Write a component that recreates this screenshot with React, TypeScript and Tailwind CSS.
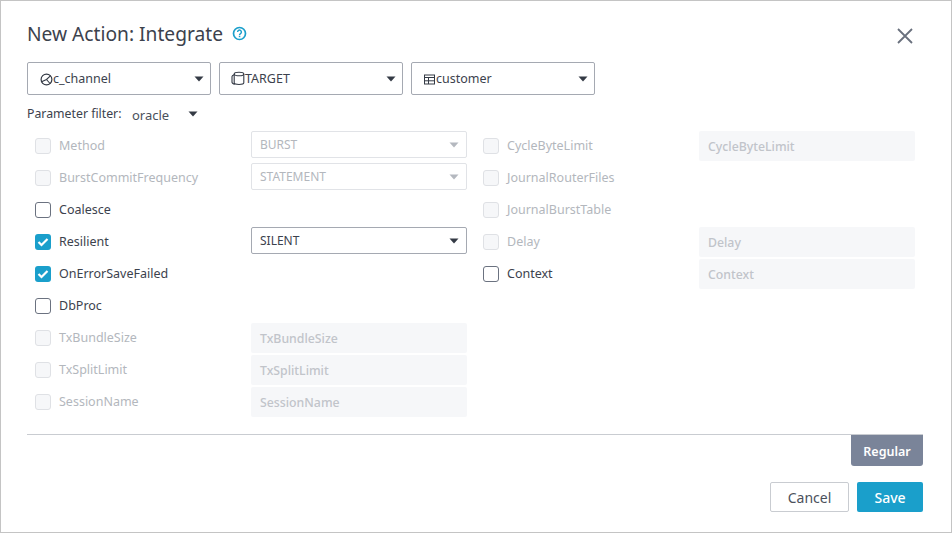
import React from "react";

const font = { fontFamily: '"Noto Sans", "Open Sans", sans-serif' };

function Caret({ light }: { light?: boolean }) {
  return (
    <svg width="10" height="6" viewBox="0 0 10 6" className="shrink-0">
      <path d="M0.5 0.5h9L5 5.5z" fill={light ? "#b4b8bf" : "#343a45"} />
    </svg>
  );
}

function Check({ state }: { state: "off" | "on" | "disabled" }) {
  if (state === "on")
    return (
      <span className="flex h-4 w-4 shrink-0 items-center justify-center rounded-[3px] bg-[#1a9fcb]">
        <svg width="12" height="10" viewBox="0 0 12 10" fill="none">
          <path d="M1.5 5l3 3 6-6" stroke="#fff" strokeWidth="2.2" />
        </svg>
      </span>
    );
  if (state === "disabled")
    return <span className="h-4 w-4 shrink-0 rounded-[3px] border border-[#dfe1e5] bg-[#f6f7f9]" />;
  return <span className="h-4 w-4 shrink-0 rounded-[3px] border border-[#6b7280] bg-white" />;
}

function CheckLabel({ label, state }: { label: string; state: "off" | "on" | "disabled" }) {
  return (
    <div className="flex items-center gap-2">
      <Check state={state} />
      <span className={state === "disabled" ? "text-[12.5px] text-[#b3b7bd]" : "text-[12.5px] text-[#3c424d]"}>
        {label}
      </span>
    </div>
  );
}

function TopSelect({ icon, label }: { icon: React.ReactNode; label: string }) {
  return (
    <div className="flex h-[33px] w-[184px] items-center rounded-[2px] border border-[#a5a9b2] pl-[12px] pr-[6px] text-[12.5px] text-[#3c424d]">
      {icon}
      <span className="mt-[2px] flex-1">{label}</span>
      <Caret />
    </div>
  );
}

function Select({ value, disabled }: { value: string; disabled?: boolean }) {
  return (
    <div
      className={
        disabled
          ? "mb-[3px] flex h-[27px] w-[216px] items-center justify-between rounded-[2px] border border-[#e1e3e7] pl-2 pr-[7px] text-[12px] text-[#b3b7bd]"
          : "mb-[3px] flex h-[27px] w-[216px] items-center justify-between rounded-[2px] border border-[#a5a9b2] pl-2 pr-[7px] text-[12px] text-[#3c424d]"
      }
    >
      <span>{value}</span>
      <Caret light={disabled} />
    </div>
  );
}

function Input({ placeholder }: { placeholder: string }) {
  return (
    <div className="flex h-[30px] w-[216px] items-center rounded-[2px] bg-[#f6f7f9] pl-[9px] pt-[3px] text-[12.3px] font-medium text-[#c1c4ca]">
      {placeholder}
    </div>
  );
}

function Row({ left, mid, right, end }: { left: React.ReactNode; mid?: React.ReactNode; right?: React.ReactNode; end?: React.ReactNode }) {
  return (
    <div className="grid h-8 grid-cols-[224px_232px_216px_216px] items-center">
      <div className="pl-2">{left}</div>
      <div>{mid}</div>
      <div>{right}</div>
      <div>{end}</div>
    </div>
  );
}

export default function App() {
  return (
    <div style={font} className="box-border h-[533px] w-[952px] border border-[#c4c4c4] bg-white pl-[26px] pr-[28px]">
      <div className="flex h-[61px] items-center pt-[4px]">
        <span className="mt-[2px] text-[19.2px] text-[#3c424d]">New Action: Integrate</span>
        <svg width="15" height="15" viewBox="0 0 15 15" fill="none" className="ml-[9px]">
          <circle cx="7.5" cy="7.5" r="6" stroke="#1a9fcb" strokeWidth="1.7" />
          <path d="M5.6 6a1.9 1.9 0 1 1 2.9 1.6c-.6.4-1 .7-1 1.3" stroke="#1a9fcb" strokeWidth="1.4" />
          <rect x="6.8" y="9.7" width="1.5" height="1.5" fill="#1a9fcb" />
        </svg>
        <svg width="18" height="18" viewBox="0 0 18 18" fill="none" className="ml-auto mr-[9px] mt-[4px]">
          <path d="M2 2l14 14M16 2L2 16" stroke="#69707d" strokeWidth="1.8" />
        </svg>
      </div>

      <div className="flex gap-2">
        <TopSelect
          label="c_channel"
          icon={
            <svg width="13" height="13" viewBox="0 0 13 13" fill="none" className="mt-[1px] shrink-0">
              <circle cx="6.5" cy="6.5" r="5.4" stroke="#343a45" strokeWidth="1.2" />
              <path d="M1.6 8.8L6.5 6.5L10.4 2.8M6.5 6.5L10 10.5" stroke="#343a45" strokeWidth="1.1" />
            </svg>
          }
        />
        <TopSelect
          label="TARGET"
          icon={
            <svg width="14" height="15" viewBox="0 0 14 15" fill="none" className="-ml-[1px] shrink-0">
              <ellipse cx="8" cy="3" rx="4.8" ry="1.8" stroke="#343a45" strokeWidth="1.1" />
              <path d="M3.2 3v8.8c0 1 2.1 1.7 4.8 1.7s4.8-.7 4.8-1.7V3" stroke="#343a45" strokeWidth="1.1" />
              <path d="M3.2 3.8C1.6 4.4 1 5 1 5.6v5.6c0 .9 1 1.6 2.9 2.1" stroke="#343a45" strokeWidth="1.1" />
            </svg>
          }
        />
        <TopSelect
          label="customer"
          icon={
            <svg width="12" height="11" viewBox="0 0 12 11" fill="none" className="mt-[1px] shrink-0">
              <rect x="0.5" y="1" width="10" height="9" stroke="#343a45" />
              <path d="M0.5 3.5h10M0.5 6.8h10M4.5 3.5V10" stroke="#343a45" />
            </svg>
          }
        />
      </div>

      <div className="mt-[9px] flex h-[20px] items-center text-[12.3px] text-[#3c424d]">
        <span className="w-[105px]">Parameter filter:</span>
        <span className="mt-[4px] w-[56px] text-[13px] text-[#4b515c]">oracle</span>
        <Caret />
      </div>

      <div className="mt-[6px]">
        <Row
          left={<CheckLabel label="Method" state="disabled" />}
          mid={<Select value="BURST" disabled />}
          right={<CheckLabel label="CycleByteLimit" state="disabled" />}
          end={<Input placeholder="CycleByteLimit" />}
        />
        <Row
          left={<CheckLabel label="BurstCommitFrequency" state="disabled" />}
          mid={<Select value="STATEMENT" disabled />}
          right={<CheckLabel label="JournalRouterFiles" state="disabled" />}
        />
        <Row left={<CheckLabel label="Coalesce" state="off" />} right={<CheckLabel label="JournalBurstTable" state="disabled" />} />
        <Row
          left={<CheckLabel label="Resilient" state="on" />}
          mid={<Select value="SILENT" />}
          right={<CheckLabel label="Delay" state="disabled" />}
          end={<Input placeholder="Delay" />}
        />
        <Row
          left={<CheckLabel label="OnErrorSaveFailed" state="on" />}
          right={<CheckLabel label="Context" state="off" />}
          end={<Input placeholder="Context" />}
        />
        <Row left={<CheckLabel label="DbProc" state="off" />} />
        <Row left={<CheckLabel label="TxBundleSize" state="disabled" />} mid={<Input placeholder="TxBundleSize" />} />
        <Row left={<CheckLabel label="TxSplitLimit" state="disabled" />} mid={<Input placeholder="TxSplitLimit" />} />
        <Row left={<CheckLabel label="SessionName" state="disabled" />} mid={<Input placeholder="SessionName" />} />
      </div>

      <div className="mt-[16px] border-t border-[#c9ccd1]">
        <div className="flex justify-end">
          <div className="flex h-[31px] w-[72px] items-center justify-center rounded-b-[3px] bg-[#7a8499] pt-[3px] text-[12.5px] font-semibold text-white">
            Regular
          </div>
        </div>
        <div className="mt-[16px] flex justify-end gap-2">
          <div className="flex h-[30px] w-[79px] items-center justify-center rounded-[2px] border border-[#c9ccd1] text-[14px] text-[#4b515c]">
            Cancel
          </div>
          <div className="flex h-[30px] w-[66px] items-center justify-center rounded-[2px] bg-[#1a9fcb] text-[14px] font-medium text-white">
            Save
          </div>
        </div>
      </div>
    </div>
  );
}
